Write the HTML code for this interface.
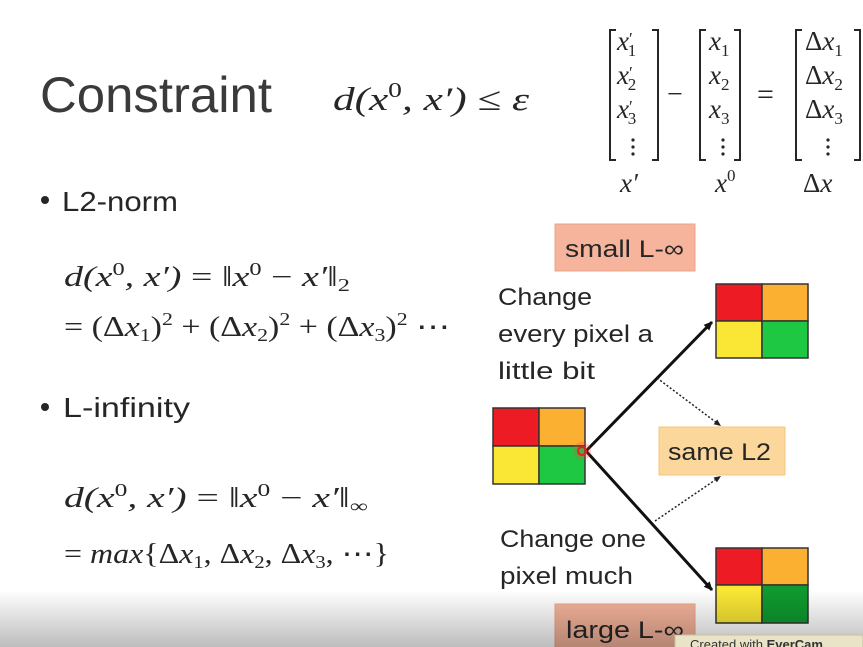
<!DOCTYPE html>
<html><head><meta charset="utf-8"><style>
html,body{margin:0;padding:0;background:#fff;width:863px;height:647px;overflow:hidden}
svg{display:block}
.s{font-family:"Liberation Sans",sans-serif;fill:#262626}
.m{font-family:"Liberation Serif",serif;font-style:italic;fill:#262626}
.u{font-family:"Liberation Serif",serif;fill:#262626}
</style></head><body>
<svg width="863" height="647" viewBox="0 0 863 647" xmlns="http://www.w3.org/2000/svg">
<defs>
<linearGradient id="g" x1="0" y1="0" x2="0" y2="1">
<stop offset="0" stop-color="#000" stop-opacity="0"/>
<stop offset="1" stop-color="#000" stop-opacity="0.26"/>
</linearGradient>
<marker id="ar" markerWidth="10" markerHeight="10" refX="8" refY="5" orient="auto" markerUnits="userSpaceOnUse"><path d="M0,1 L9,5 L0,9 z" fill="#111"/></marker>
<marker id="ar2" markerWidth="8" markerHeight="8" refX="7" refY="4" orient="auto" markerUnits="userSpaceOnUse"><path d="M0,1 L7,4 L0,7 z" fill="#222"/></marker>
</defs>

<text class="s" x="40" y="112" font-size="50" textLength="232" lengthAdjust="spacingAndGlyphs" style="fill:#3a3a3a">Constraint</text>
<text class="m" x="333" y="110" font-size="33" textLength="196" lengthAdjust="spacingAndGlyphs">d(x<tspan font-style="normal" dy="-13" font-size="21">0</tspan><tspan dy="13">, x′) ≤ ε</tspan></text>

<!-- matrices -->
<g fill="none" stroke="#262626" stroke-width="2">
<path d="M616,30 H610 V160 H616"/><path d="M652,30 H658 V160 H652"/>
<path d="M706,30 H700 V160 H706"/><path d="M734,30 H740 V160 H734"/>
<path d="M802,30 H796 V160 H802"/><path d="M854,30 H860 V160 H854"/>
</g>
<text class="u" x="667" y="103" font-size="28">−</text>
<text class="u" x="757" y="104" font-size="30">=</text>
<g class="m" font-size="27">
<text x="617" y="50">x<tspan font-style="normal" font-size="17" dy="-6">′</tspan><tspan font-style="normal" font-size="17" dx="-5" dy="12">1</tspan></text>
<text x="617" y="84">x<tspan font-style="normal" font-size="17" dy="-6">′</tspan><tspan font-style="normal" font-size="17" dx="-5" dy="12">2</tspan></text>
<text x="617" y="118">x<tspan font-style="normal" font-size="17" dy="-6">′</tspan><tspan font-style="normal" font-size="17" dx="-5" dy="12">3</tspan></text>
<text x="709" y="50">x<tspan font-style="normal" font-size="17" dy="6">1</tspan></text>
<text x="709" y="84">x<tspan font-style="normal" font-size="17" dy="6">2</tspan></text>
<text x="709" y="118">x<tspan font-style="normal" font-size="17" dy="6">3</tspan></text>
<text x="805" y="50"><tspan font-style="normal">Δ</tspan>x<tspan font-style="normal" font-size="17" dy="6">1</tspan></text>
<text x="805" y="84"><tspan font-style="normal">Δ</tspan>x<tspan font-style="normal" font-size="17" dy="6">2</tspan></text>
<text x="805" y="118"><tspan font-style="normal">Δ</tspan>x<tspan font-style="normal" font-size="17" dy="6">3</tspan></text>
<text x="620" y="192">x′</text>
<text x="715" y="192">x<tspan font-style="normal" font-size="17" dy="-11">0</tspan></text>
<text x="803" y="192"><tspan font-style="normal">Δ</tspan>x</text>
</g>
<g fill="#262626">
<circle cx="633" cy="140" r="1.6"/><circle cx="633" cy="147" r="1.6"/><circle cx="633" cy="154" r="1.6"/>
<circle cx="723" cy="140" r="1.6"/><circle cx="723" cy="147" r="1.6"/><circle cx="723" cy="154" r="1.6"/>
<circle cx="828" cy="140" r="1.6"/><circle cx="828" cy="147" r="1.6"/><circle cx="828" cy="154" r="1.6"/>
</g>

<!-- left text -->
<circle cx="45" cy="200" r="4" fill="#262626"/>
<text class="s" x="62" y="211" font-size="28" textLength="116" lengthAdjust="spacingAndGlyphs">L2-norm</text>
<text class="m" x="64" y="286" font-size="28" textLength="286" lengthAdjust="spacingAndGlyphs">d(x<tspan font-style="normal" dy="-11" font-size="18">0</tspan><tspan dy="11">, x′) </tspan><tspan font-style="normal">= ‖</tspan>x<tspan font-style="normal" dy="-11" font-size="18">0</tspan><tspan dy="11" font-style="normal"> − </tspan>x′<tspan font-style="normal">‖</tspan><tspan font-style="normal" dy="5" font-size="18">2</tspan></text>
<text class="u" x="64" y="336" font-size="28" textLength="386" lengthAdjust="spacingAndGlyphs">= (Δ<tspan font-style="italic">x</tspan><tspan dy="5" font-size="18">1</tspan><tspan dy="-5">)</tspan><tspan dy="-11" font-size="18">2</tspan><tspan dy="11"> + (Δ</tspan><tspan font-style="italic">x</tspan><tspan dy="5" font-size="18">2</tspan><tspan dy="-5">)</tspan><tspan dy="-11" font-size="18">2</tspan><tspan dy="11"> + (Δ</tspan><tspan font-style="italic">x</tspan><tspan dy="5" font-size="18">3</tspan><tspan dy="-5">)</tspan><tspan dy="-11" font-size="18">2</tspan><tspan dy="11"> ⋯</tspan></text>

<circle cx="45" cy="407" r="4" fill="#262626"/>
<text class="s" x="63" y="417" font-size="28" textLength="127" lengthAdjust="spacingAndGlyphs">L-infinity</text>
<text class="m" x="64" y="507" font-size="28" textLength="304" lengthAdjust="spacingAndGlyphs">d(x<tspan font-style="normal" dy="-11" font-size="18">0</tspan><tspan dy="11">, x′) </tspan><tspan font-style="normal">= ‖</tspan>x<tspan font-style="normal" dy="-11" font-size="18">0</tspan><tspan dy="11" font-style="normal"> − </tspan>x′<tspan font-style="normal">‖</tspan><tspan font-style="normal" dy="5" font-size="18">∞</tspan></text>
<text class="u" x="64" y="563" font-size="28" textLength="325" lengthAdjust="spacingAndGlyphs">= <tspan font-style="italic">max</tspan>{Δ<tspan font-style="italic">x</tspan><tspan dy="5" font-size="18">1</tspan><tspan dy="-5">, Δ</tspan><tspan font-style="italic">x</tspan><tspan dy="5" font-size="18">2</tspan><tspan dy="-5">, Δ</tspan><tspan font-style="italic">x</tspan><tspan dy="5" font-size="18">3</tspan><tspan dy="-5">, ⋯}</tspan></text>

<!-- right diagram -->
<rect x="555" y="224" width="140" height="47" fill="#f5b49b" stroke="#eca58a"/>
<text class="s" x="565" y="257" font-size="24" textLength="119" lengthAdjust="spacingAndGlyphs">small L-∞</text>

<g class="s" font-size="24">
<text x="498" y="305" textLength="94" lengthAdjust="spacingAndGlyphs">Change</text>
<text x="498" y="342" textLength="155" lengthAdjust="spacingAndGlyphs">every pixel a</text>
<text x="498" y="379" textLength="97" lengthAdjust="spacingAndGlyphs">little bit</text>
<text x="500" y="547" textLength="146" lengthAdjust="spacingAndGlyphs">Change one</text>
<text x="500" y="584" textLength="133" lengthAdjust="spacingAndGlyphs">pixel much</text>
</g>

<g stroke="#333" stroke-width="1.5">
<rect x="716" y="284" width="46" height="37" fill="#ed1c24"/>
<rect x="762" y="284" width="46" height="37" fill="#fbb032"/>
<rect x="716" y="321" width="46" height="37" fill="#f9e635"/>
<rect x="762" y="321" width="46" height="37" fill="#1ec843"/>

<rect x="493" y="408" width="46" height="38" fill="#ed1c24"/>
<rect x="539" y="408" width="46" height="38" fill="#fbb032"/>
<rect x="493" y="446" width="46" height="38" fill="#f9e635"/>
<rect x="539" y="446" width="46" height="38" fill="#1ec843"/>

<rect x="716" y="548" width="46" height="37" fill="#ed1c24"/>
<rect x="762" y="548" width="46" height="37" fill="#fbb032"/>
<rect x="716" y="585" width="46" height="38" fill="#f9e635"/>
<rect x="762" y="585" width="46" height="38" fill="#0e9a2e"/>
</g>

<rect x="659" y="427" width="126" height="48" fill="#fcd79c" stroke="#f5c67f"/>
<text class="s" x="668" y="460" font-size="24" textLength="103" lengthAdjust="spacingAndGlyphs">same L2</text>

<line x1="586" y1="451" x2="712" y2="322" stroke="#111" stroke-width="3" marker-end="url(#ar)"/>
<line x1="586" y1="451" x2="712" y2="590" stroke="#111" stroke-width="3" marker-end="url(#ar)"/>
<line x1="657" y1="378" x2="721" y2="426" stroke="#222" stroke-width="1.5" stroke-dasharray="2,2" marker-end="url(#ar2)"/>
<line x1="655" y1="521" x2="721" y2="476" stroke="#222" stroke-width="1.5" stroke-dasharray="2,2" marker-end="url(#ar2)"/>

<circle cx="582" cy="451" r="9" fill="#ff4040" opacity="0.25"/>
<circle cx="582" cy="451" r="4" fill="none" stroke="#e52020" stroke-width="2"/>

<rect x="555" y="604" width="140" height="50" fill="#f5b49b" stroke="#eca58a"/>
<text class="s" x="566" y="638" font-size="24" textLength="118" lengthAdjust="spacingAndGlyphs">large L-∞</text>

<rect x="0" y="590" width="863" height="57" fill="url(#g)"/>
<rect x="675" y="635" width="188" height="14" fill="#e9e3c8" stroke="#c8c0a0"/>
<text class="s" x="690" y="649" font-size="13" style="fill:#333">Created with <tspan font-weight="bold">EverCam</tspan></text>
</svg>
</body></html>
